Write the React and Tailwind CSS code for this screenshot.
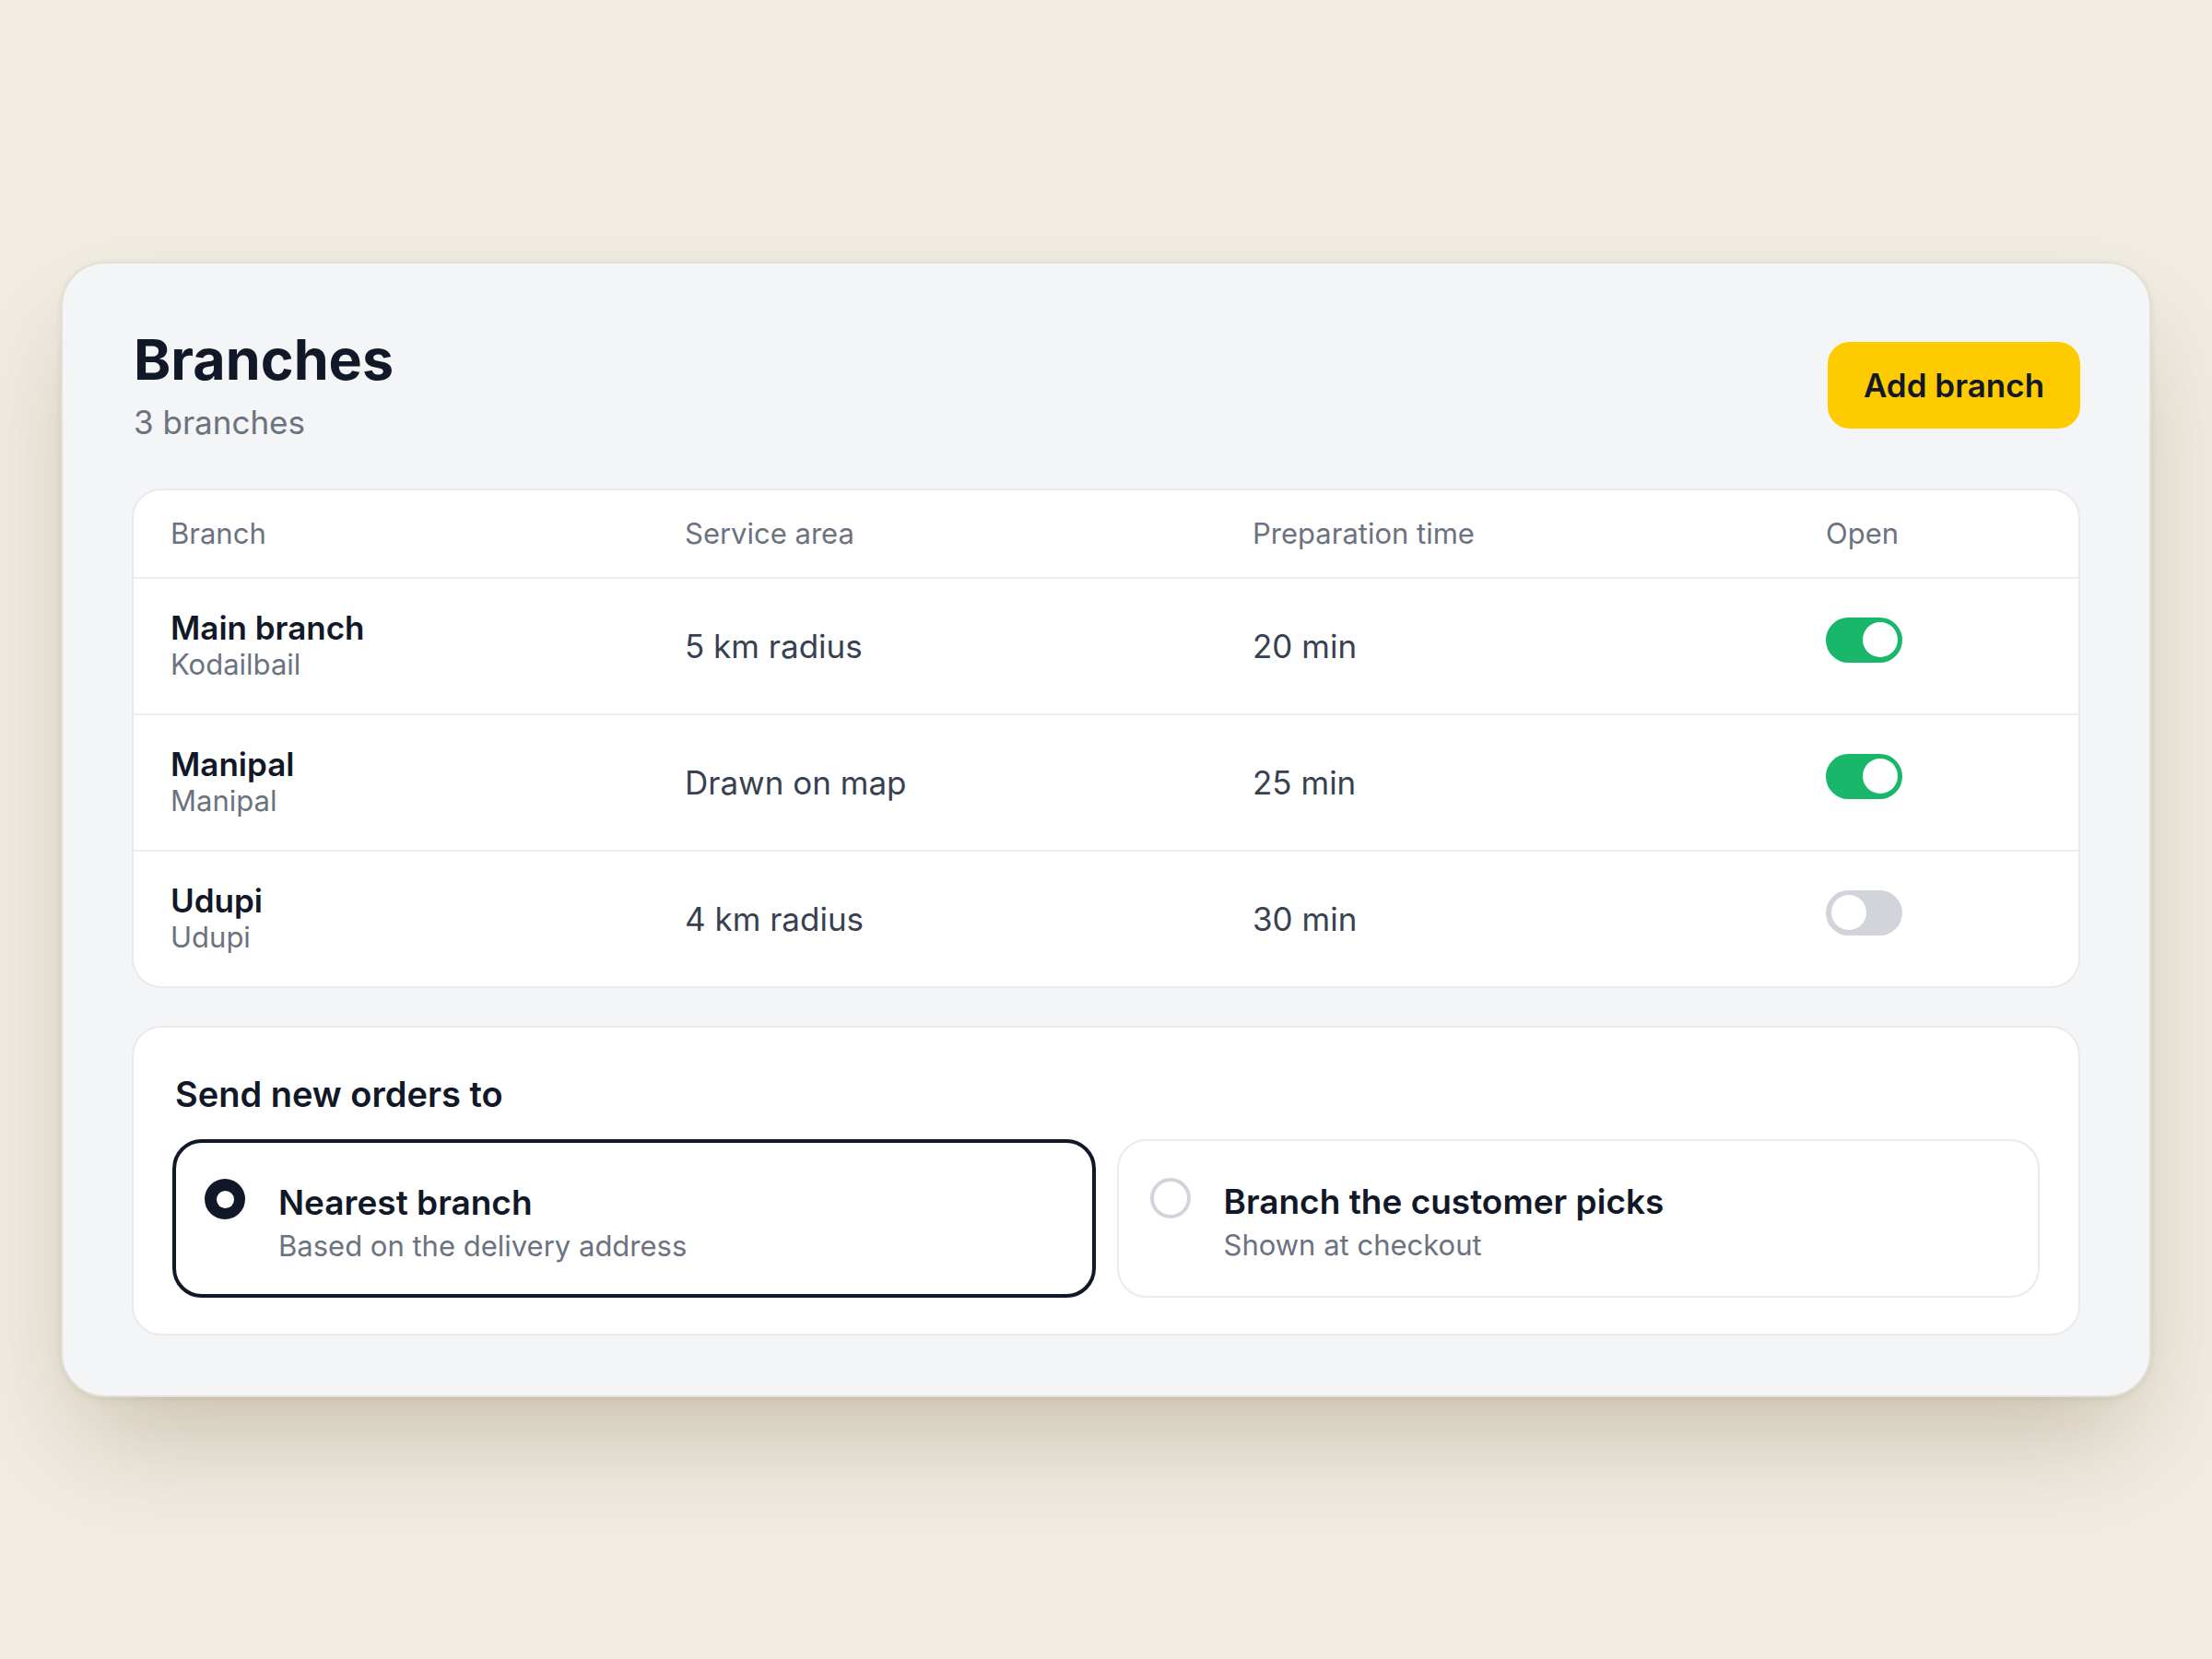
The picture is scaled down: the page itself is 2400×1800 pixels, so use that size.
import { useState } from 'react';

const branches = [
  { name: 'Main branch', area: 'Kodailbail', service: '5 km radius', prep: '20 min', open: true },
  { name: 'Manipal', area: 'Manipal', service: 'Drawn on map', prep: '25 min', open: true },
  { name: 'Udupi', area: 'Udupi', service: '4 km radius', prep: '30 min', open: false },
];

const cols = 'grid grid-cols-[558px_616px_622px_1fr] items-center px-[40px]';

function Toggle({ on, onChange }) {
  return (
    <button
      onClick={onChange}
      className={`relative w-[83px] h-[49px] rounded-full -mt-[8px] ${on ? 'bg-[#18b76a]' : 'bg-[#d1d5db]'}`}
    >
      <span
        className={`absolute top-[5.5px] w-[38px] h-[38px] rounded-full bg-white ${on ? 'left-[40px]' : 'left-[6px]'}`}
      />
    </button>
  );
}

function Option({ selected, title, hint, onClick }) {
  return (
    <div
      onClick={onClick}
      className={`flex items-start gap-[36px] rounded-[32px] bg-white ${
        selected ? 'border-4 border-[#111827] pl-[31px] pt-[39px] pb-[32px]' : 'border-2 border-[#e8eaee] pl-[34px] pt-[40px] pb-[34px]'
      }`}
    >
      {selected ? (
        <span className="w-[44px] h-[44px] rounded-full bg-[#111827] flex items-center justify-center shrink-0">
          <span className="w-[19px] h-[19px] rounded-full bg-white" />
        </span>
      ) : (
        <span className="w-[44px] h-[44px] rounded-full border-4 border-[#d1d5db] shrink-0" />
      )}
      <div className="pt-[4px]">
        <div className="text-[37px] leading-[44px] font-semibold text-[#111827]">{title}</div>
        <div className="mt-[5px] text-[31px] leading-[40px] text-[#6b7280]">{hint}</div>
      </div>
    </div>
  );
}

export default function App() {
  const [open, setOpen] = useState(branches.map((b) => b.open));
  const [route, setRoute] = useState('nearest');

  return (
    <div className="min-h-screen bg-[#f1ede4] flex items-center justify-center font-['Inter',sans-serif]">
      <div className="w-[2268px] rounded-[48px] border-2 border-[#e4e0d6] bg-[#f3f5f7] px-[75px] pt-[68px] pb-[65px] shadow-[0_60px_120px_-20px_rgba(110,90,40,0.3),0_2px_6px_rgba(90,80,50,0.12)]">
        {/* Header */}
        <div className="flex items-center justify-between">
          <div className="pl-[2px]">
            <h1 className="text-[61px] leading-[72px] font-bold text-[#111827]">Branches</h1>
            <p className="mt-2 text-[35px] leading-[48px] text-[#6b7280]">3 branches</p>
          </div>
          <button className="w-[274px] h-[94px] rounded-[24px] bg-[#fecb00] text-[35px] font-semibold text-[#111827]">
            Add branch
          </button>
        </div>

        {/* Branch table */}
        <div className="mt-[48px] rounded-[32px] border-2 border-[#e8eaee] bg-white overflow-hidden">
          <div className={`${cols} h-[94px] text-[31px] text-[#6b7280]`}>
            <div>Branch</div>
            <div>Service area</div>
            <div>Preparation time</div>
            <div>Open</div>
          </div>
          {branches.map((b, i) => (
            <div key={b.name} className={`${cols} h-[148px] border-t-2 border-[#eceef1]`}>
              <div>
                <div className="text-[35px] leading-[40px] font-semibold text-[#111827]">{b.name}</div>
                <div className="text-[31px] leading-[40px] text-[#6b7280]">{b.area}</div>
              </div>
              <div className="text-[35px] text-[#374151]">{b.service}</div>
              <div className="text-[35px] text-[#374151]">{b.prep}</div>
              <div>
                <Toggle on={open[i]} onChange={() => setOpen(open.map((v, j) => (j === i ? !v : v)))} />
              </div>
            </div>
          ))}
        </div>

        {/* Order routing */}
        <div className="mt-[41px] rounded-[32px] border-2 border-[#e8eaee] bg-white px-[42px] pt-[44px] pb-[39px]">
          <h2 className="pl-[3px] text-[38px] leading-[56px] font-semibold text-[#111827]">Send new orders to</h2>
          <div className="mt-[21px] grid grid-cols-2 gap-[23px]">
            <Option
              selected={route === 'nearest'}
              title="Nearest branch"
              hint="Based on the delivery address"
              onClick={() => setRoute('nearest')}
            />
            <Option
              selected={route === 'pick'}
              title="Branch the customer picks"
              hint="Shown at checkout"
              onClick={() => setRoute('pick')}
            />
          </div>
        </div>
      </div>
    </div>
  );
}
